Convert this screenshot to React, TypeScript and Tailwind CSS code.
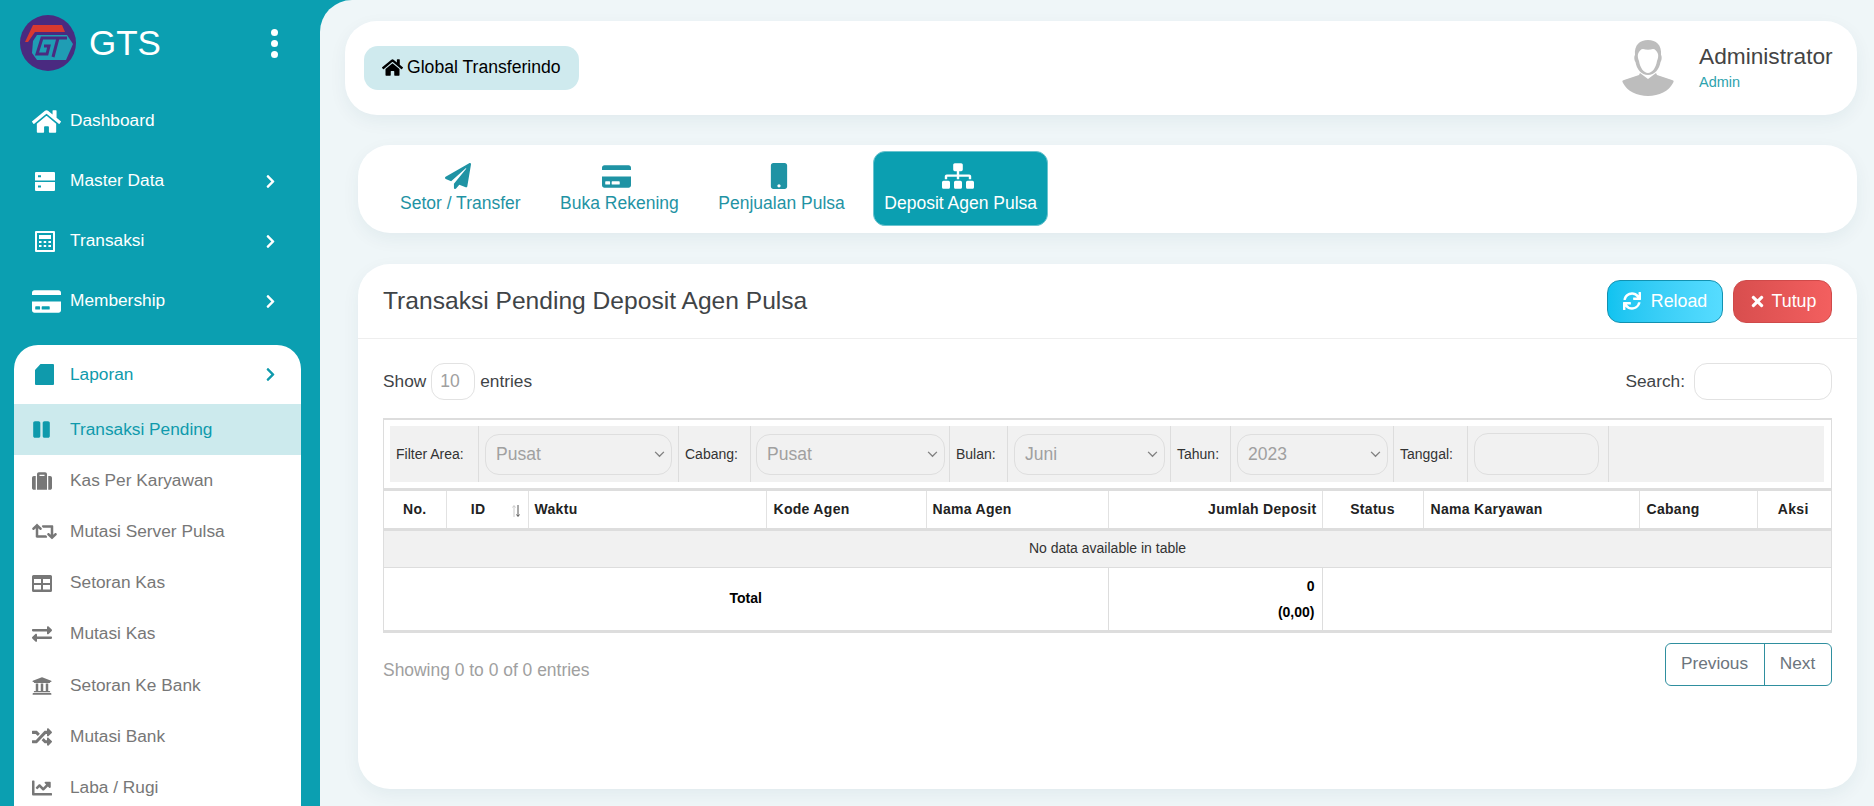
import type { ReactNode } from 'react';
import {
  FaHome,
  FaCreditCard,
  FaChevronRight,
  FaPause,
  FaSuitcase,
  FaRetweet,
  FaExchangeAlt,
  FaUniversity,
  FaRandom,
  FaChartLine,
  FaPaperPlane,
  FaMobile,
  FaSitemap,
  FaSync,
  FaTimes,
} from 'react-icons/fa';

function Logo() {
  return (
    <svg viewBox="0 0 56 56" className="w-14 h-14 shrink-0">
      <circle cx="28" cy="28" r="28" fill="#4a2a80" />
      <path d="M5 27 L13 10 H42 L45 17 H15 L8 27 Z" fill="#d8392f" />
      <path d="M13 26 L17 20 H47 L53 29 L46 45 H17 L12 38 Z" fill="#1f9db4" />
      <g fill="none" stroke="#4a2a80" strokeWidth="3">
        <path d="M32 23 H22 L17 39 H27 L29 31 H24" />
        <path d="M32 23 H47 M38 23 L33 42" />
      </g>
    </svg>
  );
}

function ServerIcon() {
  return (
    <svg viewBox="0 0 20 19" className="w-5 h-[19px]" fill="currentColor">
      <path d="M0 1a1 1 0 0 1 1-1h18a1 1 0 0 1 1 1v7.500H0zM3 3.300v2h3v-2zM0 10h20v8a1 1 0 0 1-1 1H1a1 1 0 0 1-1-1zM3 13.500v2h3v-2z" fillRule="evenodd" />
    </svg>
  );
}

function CalculatorIcon() {
  return (
    <svg viewBox="0 0 20 21" className="w-5 h-[21px]" fill="currentColor">
      <path d="M1 0h18a1 1 0 0 1 1 1v19a1 1 0 0 1-1 1H1a1 1 0 0 1-1-1V1a1 1 0 0 1 1-1zm1 2v17h16V2zm2 2h12v4H4zm0 6h2.500v2H4zm4.700 0h2.500v2H8.700zm4.700 0H16v2h-2.600zM4 14h2.500v2H4zm4.700 0h2.500v2H8.700zm4.700 0H16v2h-2.600z" fillRule="evenodd" />
    </svg>
  );
}

function ReportIcon() {
  return (
    <svg viewBox="0 0 19 21" className="w-[19px] h-[21px]" fill="currentColor">
      <path d="M5.500 0H18a1 1 0 0 1 1 1v19a1 1 0 0 1-1 1H1a1 1 0 0 1-1-1V6z" />
    </svg>
  );
}

function TableIcon() {
  return (
    <svg viewBox="0 0 20 17" className="w-5 h-[17px]" fill="currentColor">
      <path d="M1.500 0h17A1.500 1.500 0 0 1 20 1.500v14a1.500 1.500 0 0 1-1.500 1.500h-17A1.500 1.500 0 0 1 0 15.500v-14A1.500 1.500 0 0 1 1.500 0zM2 4v4h7V4zm9 0v4h7V4zM2 10v4.500h7V10zm9 0v4.500h7V10z" fillRule="evenodd" />
    </svg>
  );
}

function Avatar() {
  return (
    <svg viewBox="0 0 52 56" className="w-[52px] h-14" fill="#bdbdbd">
      <path d="M13 15C12 5 18 0 26 0s14 5 13 15c1 1 1 5-.5 7-1 7-6 13-12.500 13S14.500 29 13.500 22C12 20 12 16 13 15zm3-1c-.5 2 0 5 1 7 1 7 5 12 9 12s8-5 9-12c1-2 1.500-5 1-7-1-3-3-5-5-5-3 1-7 1-10 0-2 0-4 2-5 5z" fillRule="evenodd" />
      <path d="M18 33l8 6 8-6 1 2 15 5c2 .500 2 1 1 3-4 8-14 13-25 13S5 51 1 43c-1-2-1-2.500 1-3l15-5z" />
    </svg>
  );
}

function SelectChevron() {
  return (
    <svg viewBox="0 0 12 8" className="w-[11px] h-[7px] shrink-0" fill="none" stroke="#808080" strokeWidth="1.500">
      <path d="M1 1l5 5 5-5" />
    </svg>
  );
}

function SortIcon() {
  return (
    <svg viewBox="0 0 10 14" className="w-2.5 h-3.5 absolute right-[7px] top-[13px]" fill="none" strokeWidth="1">
      <path d="M3 13V2M1.500 3.500L3 1.500l1.500 2" stroke="#c8c8c8" />
      <path d="M7 1v11M5.500 10.500L7 12.500l1.500-2" stroke="#555" />
    </svg>
  );
}

function SideItem({ icon, label, arrow }: { icon: ReactNode; label: string; arrow?: boolean }) {
  return (
    <div className="flex items-center h-[60px] pl-8 pr-[41px] text-white">
      <span className="w-[38px] flex justify-start">{icon}</span>
      <span className="flex-1">{label}</span>
      {arrow && <FaChevronRight className="text-[15px] mr-[1px]" />}
    </div>
  );
}

function SubItem({ icon, label, active }: { icon: ReactNode; label: string; active?: boolean }) {
  return (
    <div className={`flex items-center h-[51.2px] pl-[18px] ${active ? 'bg-[#cceaed] text-[#0f9aac]' : 'text-[#777777]'}`}>
      <span className="w-[38px] text-[20px] flex items-center">{icon}</span>
      <span>{label}</span>
    </div>
  );
}

function FilterSelect({ value, className }: { value: string; className: string }) {
  return (
    <div className={`h-[41px] rounded-[14px] border border-[#dedede] flex items-center justify-between pl-[10px] pr-[6px] text-[17.5px] text-[#a0a0a0] ${className}`}>
      <span>{value}</span>
      <SelectChevron />
    </div>
  );
}

const tabs = [
  { name: 'Setor / Transfer', icon: <FaPaperPlane className="text-[26px]" /> },
  { name: 'Buka Rekening', icon: <FaCreditCard className="text-[29px]" /> },
  { name: 'Penjualan Pulsa', icon: <FaMobile className="text-[26px]" /> },
  { name: 'Deposit Agen Pulsa', icon: <FaSitemap className="text-[32px]" />, active: true },
];

export default function App() {
  return (
    <div className="flex h-screen overflow-hidden bg-[#0b9fb1] font-['Liberation_Sans',Arial,sans-serif] text-[17.3px] leading-normal">
      {/* Sidebar */}
      <aside className="w-[320px] shrink-0 flex flex-col">
        <div className="h-[91px] shrink-0 pl-5 pr-[42px] pb-[5px] flex items-center text-white">
          <Logo />
          <span className="ml-[13px] text-[35px] flex-1">GTS</span>
          <div className="flex flex-col gap-1">
            <span className="w-[7px] h-[7px] rounded-full bg-white" />
            <span className="w-[7px] h-[7px] rounded-full bg-white" />
            <span className="w-[7px] h-[7px] rounded-full bg-white" />
          </div>
        </div>
        <SideItem icon={<FaHome className="text-[29px]" />} label="Dashboard" />
        <SideItem icon={<span className="pl-[3px]"><ServerIcon /></span>} label="Master Data" arrow />
        <SideItem icon={<span className="pl-[3px]"><CalculatorIcon /></span>} label="Transaksi" arrow />
        <SideItem icon={<FaCreditCard className="text-[29px]" />} label="Membership" arrow />
        <div className="ml-[14px] mr-[19px] mt-[14px] flex-1 bg-white rounded-t-[24px] overflow-hidden">
          <div className="flex items-center h-[59px] pl-[18px] pr-[23px] text-[#0f9aac]">
            <span className="w-[38px] pl-[3px]"><ReportIcon /></span>
            <span className="flex-1">Laporan</span>
            <FaChevronRight className="text-[15px]" />
          </div>
          <SubItem active icon={<FaPause className="text-[19px]" />} label="Transaksi Pending" />
          <SubItem icon={<FaSuitcase />} label="Kas Per Karyawan" />
          <SubItem icon={<FaRetweet className="text-[25px]" />} label="Mutasi Server Pulsa" />
          <SubItem icon={<TableIcon />} label="Setoran Kas" />
          <SubItem icon={<FaExchangeAlt />} label="Mutasi Kas" />
          <SubItem icon={<FaUniversity />} label="Setoran Ke Bank" />
          <SubItem icon={<FaRandom />} label="Mutasi Bank" />
          <SubItem icon={<FaChartLine />} label="Laba / Rugi" />
        </div>
      </aside>

      {/* Main */}
      <main className="flex-1 min-w-0 bg-[#eff6f8] rounded-tl-[32px] pt-[21px] pl-[25px] pr-[17px] flex flex-col">
        <header className="h-[94px] shrink-0 bg-white rounded-[32px] shadow-[0_6px_18px_rgba(20,70,90,0.06)] flex items-center justify-between pl-[19px] pr-[25px]">
          <div className="h-11 w-[215px] rounded-[14px] bg-[#cfeaee] flex items-center pl-[18px] pb-[1px] gap-[4px] text-black text-[17.6px]">
            <FaHome className="text-[21px]" />
            <span>Global Transferindo</span>
          </div>
          <div className="flex items-center">
            <Avatar />
            <div className="ml-[25px] w-[133px] mb-[3px]">
              <div className="text-[22.7px] leading-[28px] text-[#444444]">Administrator</div>
              <div className="text-[14.5px] leading-[18px] mt-[3px] text-[#2ea3ae]">Admin</div>
            </div>
          </div>
        </header>

        <nav className="ml-[13px] mt-[30px] h-[88px] shrink-0 bg-white rounded-[32px] shadow-[0_6px_18px_rgba(20,70,90,0.06)] flex items-center pl-[31px] gap-[17.5px] text-[17.5px]">
          {tabs.map((tab) => (
            <div
              key={tab.name}
              className={`h-[75px] mb-[1px] px-[10px] rounded-[12px] border flex flex-col items-center justify-center whitespace-nowrap ${tab.active ? 'bg-[#0b9fb1] border-[#6cc4cf] text-white' : 'border-transparent text-[#1f93a4]'}`}
            >
              <div className="h-[27px] pr-[5px] flex items-center">{tab.icon}</div>
              <div className="leading-[24px] mt-[1px]">{tab.name}</div>
            </div>
          ))}
        </nav>

        <section className="ml-[13px] mt-[31px] h-[525px] shrink-0 bg-white rounded-[32px] shadow-[0_6px_18px_rgba(20,70,90,0.06)]">
          <div className="h-[75px] border-b border-[#eeeeee] flex items-center justify-between pl-[25px] pr-[25px]">
            <h1 className="text-[24.6px] text-[#3f4447]">Transaksi Pending Deposit Agen Pulsa</h1>
            <div className="flex gap-[10px] text-white text-[17.8px]">
              <button className="h-[43px] w-[116px] rounded-[13px] border border-[#1291b0] bg-gradient-to-r from-[#10c3f0] to-[#56dcff] flex items-center justify-center gap-[10px]">
                <FaSync className="text-[18px]" />
                Reload
              </button>
              <button className="h-[43px] w-[99px] rounded-[13px] border border-[#cf4a4a] bg-gradient-to-r from-[#d84e4e] to-[#f35f5f] flex items-center justify-center gap-[6px]">
                <FaTimes className="text-[17px]" />
                Tutup
              </button>
            </div>
          </div>

          <div className="pl-[25px] pr-[25px]">
            <div className="flex items-center justify-between mt-[24px] h-[37px] text-[#3f4447]">
              <div className="flex items-center">
                Show
                <div className="w-[44px] h-[37px] mx-[5px] rounded-[13px] border border-[#e2e2e2] pl-[8px] flex items-center text-[#a0a0a0] text-[17.5px]">10</div>
                entries
              </div>
              <div className="flex items-center">
                Search:
                <div className="w-[138px] h-[37px] ml-[9px] rounded-[13px] border border-[#e2e2e2]" />
              </div>
            </div>

            {/* Filter + table */}
            <div className="mt-[18px] border-t-2 border-x border-[#dddddd]">
              <div className="pl-[6px] pr-[7px] pt-[6px] pb-[6px] border-b-[3px] border-[#dddddd]">
                <div className="flex h-[56px] bg-[#f1f1f1] text-[14px] text-[#333333] items-center">
                  <div className="h-full w-[89px] pl-[6px] flex items-center border-r border-[#dddddd]">Filter Area:</div>
                  <div className="h-full w-[200px] pl-[6px] flex items-center border-r border-[#dddddd]"><FilterSelect value="Pusat" className="w-[187px]" /></div>
                  <div className="h-full w-[72px] pl-[6px] flex items-center border-r border-[#dddddd]">Cabang:</div>
                  <div className="h-full w-[199px] pl-[5px] flex items-center border-r border-[#dddddd]"><FilterSelect value="Pusat" className="w-[189px]" /></div>
                  <div className="h-full w-[58px] pl-[6px] flex items-center border-r border-[#dddddd]">Bulan:</div>
                  <div className="h-full w-[163px] pl-[6px] flex items-center border-r border-[#dddddd]"><FilterSelect value="Juni" className="w-[151px]" /></div>
                  <div className="h-full w-[60px] pl-[6px] flex items-center border-r border-[#dddddd]">Tahun:</div>
                  <div className="h-full w-[163px] pl-[6px] flex items-center border-r border-[#dddddd]"><FilterSelect value="2023" className="w-[151px]" /></div>
                  <div className="h-full w-[74px] pl-[6px] flex items-center border-r border-[#dddddd]">Tanggal:</div>
                  <div className="h-full w-[141px] pl-[6px] flex items-center border-r border-[#dddddd]">
                    <div className="w-[125px] h-[42px] rounded-[14px] border border-[#dedede]" />
                  </div>
                </div>
              </div>

              <table className="w-full table-fixed border-collapse text-[14px] text-[#222222]">
                <colgroup>
                  <col className="w-[62px]" />
                  <col className="w-[82px]" />
                  <col className="w-[238px]" />
                  <col className="w-[160px]" />
                  <col className="w-[182px]" />
                  <col className="w-[214px]" />
                  <col className="w-[101px]" />
                  <col className="w-[216px]" />
                  <col className="w-[118px]" />
                  <col />
                </colgroup>
                <thead>
                  <tr className="h-[38px] font-bold tracking-[0.3px] border-b-[3px] border-[#dddddd]">
                    <th className="border-r border-[#e2e2e2] text-center">No.</th>
                    <th className="border-r border-[#e2e2e2] text-center pr-[18px] relative">ID<SortIcon /></th>
                    <th className="border-r border-[#e2e2e2] text-left pl-[6px]">Waktu</th>
                    <th className="border-r border-[#e2e2e2] text-left pl-[7px]">Kode Agen</th>
                    <th className="border-r border-[#e2e2e2] text-left pl-[6px]">Nama Agen</th>
                    <th className="border-r border-[#e2e2e2] text-right pr-[5px]">Jumlah Deposit</th>
                    <th className="border-r border-[#e2e2e2] text-center">Status</th>
                    <th className="border-r border-[#e2e2e2] text-left pl-[7px]">Nama Karyawan</th>
                    <th className="border-r border-[#e2e2e2] text-left pl-[7px]">Cabang</th>
                    <th className="text-center pr-[2px]">Aksi</th>
                  </tr>
                </thead>
                <tbody>
                  <tr className="h-[38px] bg-[#f1f1f1] border-b border-[#dddddd]">
                    <td colSpan={10} className="text-center text-[#333333]">No data available in table</td>
                  </tr>
                  <tr className="h-[64px] border-b-[3px] border-[#dddddd] font-bold text-black">
                    <td colSpan={5} className="text-center border-r border-[#dddddd]">Total</td>
                    <td className="text-right pr-[7px] border-r border-[#dddddd] leading-[26px]">
                      <div>0</div>
                      <div>(0,00)</div>
                    </td>
                    <td colSpan={4} />
                  </tr>
                </tbody>
              </table>
            </div>

            <div className="flex justify-between mt-[10px]">
              <div className="mt-[14px] leading-[26px] text-[17.45px] text-[#a0a0a0]">Showing 0 to 0 of 0 entries</div>
              <div className="flex h-[43px] border border-[#2f8f9f] rounded-[6px] text-[#6c757d]">
                <div className="w-[99px] pr-[1px] flex items-center justify-center border-r border-[#2f8f9f]">Previous</div>
                <div className="w-[66px] pr-[1px] flex items-center justify-center">Next</div>
              </div>
            </div>
          </div>
        </section>
      </main>
    </div>
  );
}
